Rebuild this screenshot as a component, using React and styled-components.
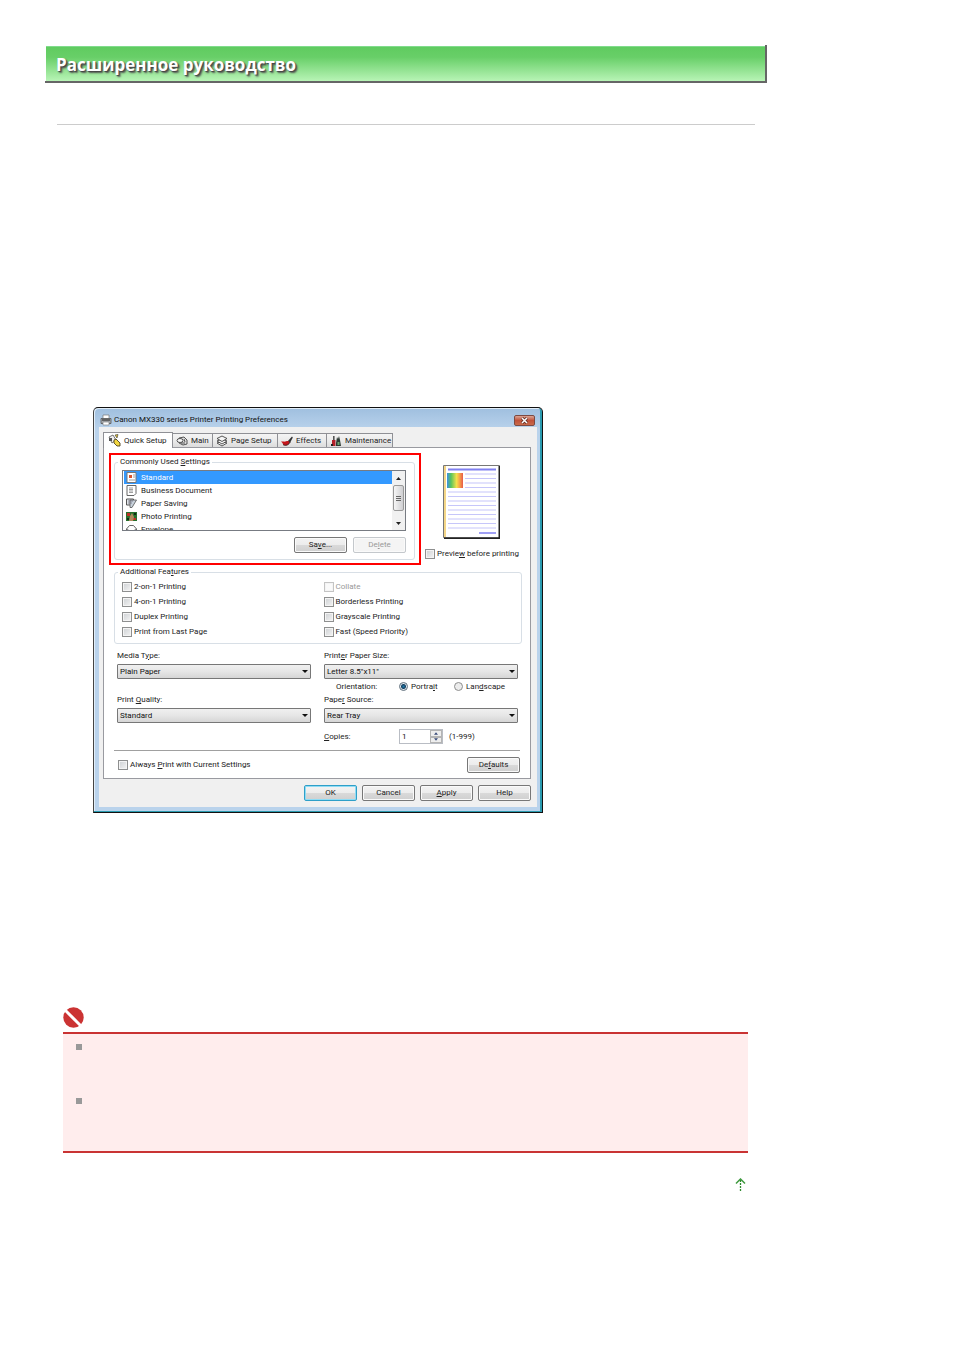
import React from "react";
import styled, { createGlobalStyle } from "styled-components";

const GlobalStyle = createGlobalStyle`
  * {
    box-sizing: border-box;
  }

  body {
    margin: 0;
    background: #fff;
    font-family: Roboto, "Liberation Sans", sans-serif;
  }

  svg {
    flex-shrink: 0;
  }
`;

const Page = styled.div`
  padding: 45px 187px 160px 45px;
`;

const Banner = styled.header`
  border-right: 2px solid #666;
  border-bottom: 2px solid #666;
  height: 38px;
  padding: 1px 0 0 1px;
`;

const BannerTitle = styled.h1`
  margin: 0;
  height: 35px;
  padding-left: 10px;
  border-top: 1px solid #80dc8c;
  background: linear-gradient(#60cb60, #68cf68 30%, #b8f4b6);
  color: #fff;
  font: 700 17px/36px "Open Sans", "Noto Sans", sans-serif;
  text-shadow: 1px 1px 1px #444, 2px 2px 2px #555;
  white-space: nowrap;
`;

const Rule = styled.hr`
  margin: 41px 12px 0;
  border: 0;
  border-top: 1px solid #ccc;
`;

const Figure = styled.figure`
  margin: 282px 0 0 48px;
`;

const Dialog = styled.section`
  width: 100%;
  max-width: 450px;
  padding: 0 5px 5px;
  border: 1px solid #111;
  border-left-color: #444;
  border-radius: 5px 5px 0 0;
  background: linear-gradient(#9fbfdf, #bad3ec 22px, #bad3ec);
  box-shadow: inset -2px -1px 0 #2a9bb0, inset 1px 1px 0 #e2eef8;
  color: #222;
  font-size: 8px;
  line-height: 12px;
`;

const TitleBar = styled.div`
  display: flex;
  align-items: center;
  gap: 2px;
  height: 19px;
  padding: 5px 2px 0 1px;
`;

const DialogTitle = styled.h2`
  flex: 1;
  margin: 0;
  color: #111;
  font-size: 8px;
  font-weight: 400;
`;

const CloseButton = styled.button`
  display: flex;
  align-items: center;
  justify-content: center;
  width: 21px;
  height: 11px;
  padding: 0;
  border: 1px solid #7d4a42;
  border-radius: 2px;
  background: linear-gradient(#dba494, #c0523a 50%, #c96a4a);
`;

const Client = styled.div`
  padding: 4px 6px 6px 4px;
  background: #f0f0f0;
`;

const TabList = styled.div`
  display: flex;
  align-items: flex-end;
  height: 16px;
`;

const Tab = styled.button`
  position: relative;
  display: flex;
  align-items: center;
  gap: 3px;
  width: ${(p) => p.$width}px;
  height: ${(p) => (p.$active ? 16 : 14)}px;
  margin-bottom: ${(p) => (p.$active ? -1 : 0)}px;
  padding: 0 0 0 ${(p) => (p.$active ? 4 : 3)}px;
  border: 1px solid #8f9095;
  border-left-width: ${(p) => (p.$active ? 1 : 0)}px;
  border-bottom: 0;
  background: ${(p) =>
    p.$active ? "#fff" : "linear-gradient(#f4f4f4, #ebebeb 50%, #dcdcdc)"};
  color: #222;
  font: inherit;
  white-space: nowrap;
`;

const Pane = styled.div`
  padding: 5px 0 5px 5px;
  border: 1px solid #999aa0;
  background: #fff;
`;

const TopRow = styled.div`
  display: flex;
  gap: 4px;
`;

const Highlight = styled.div`
  flex: 0 1 312px;
  padding: 2px 4px 3px 3px;
  border: 2px solid #f00;
`;

const Group = styled.fieldset`
  min-width: 0;
  margin: ${(p) => p.$margin || "0"};
  padding: ${(p) => p.$padding};
  border: 1px solid #d8dfe6;
  border-radius: 3px;
`;

const Legend = styled.legend`
  margin-left: ${(p) => p.$indent || 0}px;
  padding: 0 2px;
  line-height: 10px;
`;

const ListFrame = styled.div`
  display: flex;
  height: 61px;
  border: 1px solid #777b82;
  background: #fff;
`;

const List = styled.ul`
  flex: 1;
  margin: 0;
  padding: 0 0 0 1px;
  overflow: hidden;
  list-style: none;
`;

const ListItem = styled.li`
  display: flex;
  align-items: center;
  gap: 4px;
  height: 13px;
  padding-left: 2px;
  background: ${(p) => (p.$selected ? "#3399ff" : "transparent")};
  color: ${(p) => (p.$selected ? "#fff" : "#222")};
`;

const ScrollBar = styled.div`
  display: flex;
  flex-direction: column;
  align-items: center;
  width: 13px;
  background: #f1f1f1;
`;

const ScrollButton = styled.button`
  display: flex;
  align-items: center;
  justify-content: center;
  width: 100%;
  height: 14px;
  padding: 0;
  border: 0;
  background: none;
`;

const ScrollThumb = styled.div`
  display: flex;
  flex-direction: column;
  align-items: center;
  justify-content: center;
  gap: 1px;
  width: 11px;
  height: 26px;
  margin-bottom: auto;
  border: 1px solid #999;
  border-radius: 2px;
  background: linear-gradient(90deg, #f6f6f6, #cfcfd2);

  i {
    width: 5px;
    height: 1px;
    background: #666;
  }
`;

const ButtonRow = styled.div`
  display: flex;
  justify-content: flex-end;
  gap: ${(p) => p.$gap || 5}px;
  margin-top: 6px;
`;

const Button = styled.button`
  width: 53px;
  height: 16px;
  padding: 0;
  border: 1px solid ${(p) => (p.$primary ? "#2f9fc8" : "#777")};
  border-radius: 2px;
  background: linear-gradient(#f3f3f3, #ececec 50%, #dadada 50%, #cfcfcf);
  box-shadow: inset 0 0 0 1px ${(p) => (p.$primary ? "#8fdcf5" : "#fafafa")};
  color: #222;
  font: inherit;

  &:disabled {
    border-color: #c4c8cc;
    background: #f4f4f4;
    color: #999;
  }
`;

const PreviewColumn = styled.div`
  flex: 1;
  display: flex;
  flex-direction: column;
  gap: 7px;
  padding-top: 12px;
`;

const PreviewPage = styled.svg`
  display: block;
  margin-left: 18px;
`;

const CheckLabel = styled.label`
  display: flex;
  align-items: center;
  gap: 2px;
  height: 15px;
  color: ${(p) => (p.$disabled ? "#999" : "#222")};
  white-space: nowrap;
`;

const Check = styled.input`
  appearance: none;
  width: 10px;
  height: 10px;
  margin: 0;
  border: 1px solid #8e8f8f;
  background: linear-gradient(135deg, #cdd0d3, #f4f4f4);
  box-shadow: inset 0 0 0 1px #f4f4f4;

  &:disabled {
    border-color: #c4c4c4;
    background: #fafafa;
  }
`;

const Radio = styled.input`
  appearance: none;
  width: 9px;
  height: 9px;
  margin: 0 1px 0 0;
  border: 1px solid #8e8f8f;
  border-radius: 50%;
  background: #ececec;

  &:checked {
    border-color: #5f6f7c;
    background: radial-gradient(#1d7fb0 0, #163f60 2px, #dfe8ee 3px);
  }
`;

const Columns = styled.div`
  display: grid;
  grid-template-columns: 1fr 1fr;
  column-gap: ${(p) => p.$gap || 0}px;
`;

const FormColumns = styled(Columns)`
  margin: 6px 12px 0 8px;
`;

const Field = styled.div`
  display: flex;
  flex-direction: column;
  gap: 2px;
  margin-bottom: ${(p) => p.$after || 0}px;
`;

const SelectBox = styled.span`
  position: relative;
  display: block;

  &::after {
    content: "";
    position: absolute;
    top: 6px;
    right: 3px;
    border: 3px solid transparent;
    border-top-color: #111;
    border-bottom: 0;
    pointer-events: none;
  }
`;

const Select = styled.select`
  appearance: none;
  display: block;
  width: 100%;
  height: 15px;
  padding: 0 2px;
  border: 1px solid #777;
  border-radius: 1px;
  background: linear-gradient(#f0f0f0, #e6e6e6 50%, #d6d6d6);
  color: #111;
  font: inherit;
`;

const Orientation = styled.div`
  display: flex;
  align-items: center;
  height: 15px;
  padding-left: 12px;

  > span {
    width: 63px;
  }

  label {
    width: 55px;
  }
`;

const Copies = styled.div`
  display: flex;
  align-items: center;
  height: 15px;
  margin-top: 6px;

  > label {
    width: 75px;
  }
`;

const Spinner = styled.span`
  display: flex;
  width: 44px;
  height: 15px;
  margin-right: 6px;
  border: 1px solid #b9bdc4;
`;

const NumberInput = styled.input`
  flex: 1;
  min-width: 0;
  padding: 0 2px;
  border: 0;
  color: #111;
  font: inherit;
`;

const SpinButtons = styled.span`
  display: flex;
  flex-direction: column;
  width: 12px;

  button {
    display: flex;
    flex: 1;
    align-items: center;
    justify-content: center;
    padding: 0;
    border: 1px solid #b4b4b4;
    background: #eee;
  }
`;

const Divider = styled.hr`
  margin: 6px 10px 6px 5px;
  border: 0;
  border-top: 1px solid #a0a0a0;
`;

const PaneFooter = styled.div`
  display: flex;
  justify-content: space-between;
  padding: 0 10px 0 9px;
`;

const NoteIcon = styled.svg`
  display: block;
  margin: 194px 0 4px 18px;
`;

const Note = styled.ul`
  min-height: 121px;
  margin: 0 19px 0 18px;
  padding: 10px 13px 0;
  border: solid #c93333;
  border-width: 2px 0;
  background: #ffeded;
  list-style: none;

  li {
    height: 53px;
  }

  li::before {
    content: "";
    display: block;
    width: 6px;
    height: 6px;
    background: #999;
  }

  li + li {
    margin-top: 1px;
  }
`;

const TopLink = styled.a`
  display: block;
  width: 11px;
  margin: 25px 21px 0 auto;

  svg {
    display: block;
  }
`;

const Arrow = ({ up, color = "#222", size = 5 }) => (
  <svg width={size} height="3" viewBox="0 0 5 3">
    <path d={up ? "M0 3L2.5 0L5 3z" : "M0 0L2.5 3L5 0z"} fill={color} />
  </svg>
);

const PrinterIcon = () => (
  <svg width="12" height="12" viewBox="0 0 12 12">
    <path d="M3 1h6v4H3z" fill="#fff" stroke="#777" strokeWidth=".7" />
    <path d="M1 4.5h10v5H1z" fill="#a9adb1" stroke="#555" strokeWidth=".8" />
    <path d="M2 5.3h8v1.4H2z" fill="#444" />
    <path d="M3 8h6v3H3z" fill="#fff" stroke="#777" strokeWidth=".6" />
  </svg>
);

const tabIcons = {
  quick: (
    <svg width="13" height="13" viewBox="0 0 13 13">
      <path d="M1 3l4-2 3 5-4 3z" fill="#eee" stroke="#555" strokeWidth=".8" />
      <path d="M1 4h3v3H1z" fill="#555" />
      <path d="M7 1l3-.5L9 4z" fill="#e8c531" stroke="#333" strokeWidth=".6" />
      <path
        d="M6 6l2-1 4 4v3H9L6 9z"
        fill="#f2d640"
        stroke="#4d4220"
        strokeWidth=".9"
      />
    </svg>
  ),
  main: (
    <svg width="12" height="12" viewBox="0 0 12 12">
      <path
        d="M3 3l5-1 3 3v4l-4 1-4-2z"
        fill="#ddd"
        stroke="#444"
        strokeWidth=".9"
      />
      <ellipse cx="4" cy="5.5" rx="3" ry="2" fill="#f7f7f7" stroke="#555" />
      <path d="M5 8h4M8 4l1 3" stroke="#333" strokeWidth=".8" />
    </svg>
  ),
  page: (
    <svg width="12" height="12" viewBox="0 0 12 12">
      <g fill="#f5f5f5" stroke="#444" strokeWidth=".9">
        <path d="M1 8l5-2 5 2-5 3z" />
        <path d="M1 6l5-2 5 2-5 3z" />
        <path d="M1 3.5L6 1l5 2.5-5 3z" />
      </g>
    </svg>
  ),
  effects: (
    <svg width="12" height="12" viewBox="0 0 12 12">
      <path d="M6 7l5-5.5.8 1L9 8z" fill="#333" />
      <path d="M0 6.5h3C4 7 5 6 7 6c2 .5 2 3-1 4-2 .6-4 0-4.5-2z" fill="#c4161c" />
      <path d="M2 9.5c2 1.5 5 1 7-2" stroke="#3c1010" fill="none" />
    </svg>
  ),
  maintenance: (
    <svg width="12" height="12" viewBox="0 0 12 12">
      <path d="M3 1h1.6v4H3z" fill="#555" />
      <path d="M2 5h3.5v6H2z" fill="#b3202a" />
      <path d="M6 8l1-6 1 2 1-3 1 4 1 6H6z" fill="#2d3a34" />
      <path d="M7.5 7h2v3h-2z" fill="#69a46f" />
      <path d="M1 9h2v2H1z" fill="#222" />
    </svg>
  ),
};

const listIcons = {
  standard: (
    <svg width="11" height="11" viewBox="0 0 11 11">
      <path d="M1 .5h9v10H1z" fill="#fff" stroke="#777" />
      <path d="M3 3h3v3H3z" fill="#d9532c" />
      <path d="M7 3h2M7 5h2M3 8h6" stroke="#888" strokeWidth=".8" />
    </svg>
  ),
  business: (
    <svg width="11" height="11" viewBox="0 0 11 11">
      <path d="M1 .5h9v8l-2 2H1z" fill="#fff" stroke="#666" />
      <path d="M3 3h4M3 4.5h4M3 6h4M3 7.5h4" stroke="#777" strokeWidth=".7" />
    </svg>
  ),
  saving: (
    <svg width="11" height="11" viewBox="0 0 11 11">
      <path d="M.5 1h7v5l-3 1H.5z" fill="#dfe3e8" stroke="#555" />
      <path d="M4 2h6.5L6 9.5H4z" fill="#c8d2dc" stroke="#555" strokeWidth=".8" />
      <path d="M2 3h5M2 5h4" stroke="#667" strokeWidth=".7" />
    </svg>
  ),
  photo: (
    <svg width="11" height="11" viewBox="0 0 11 11">
      <path d="M0 1h11v9H0z" fill="#27702d" />
      <path d="M1 2h3v3H1zM7 7h3v2H7z" fill="#be2f28" />
      <path d="M4 5l2-3 2 4-1 4H3z" fill="#b28a5d" />
      <path d="M8 2h2v2H8zM1 7h2v2H1z" fill="#112c16" />
    </svg>
  ),
  envelope: (
    <svg width="11" height="11" viewBox="0 0 11 11">
      <path d="M.5 5l3-3.5h4l3 3.5v5H.5z" fill="#fff" stroke="#666" />
      <path d="M.5 5L5.5 8l5-3" fill="none" stroke="#666" strokeWidth=".8" />
    </svg>
  ),
};

const tabs = [
  { icon: "quick", label: "Quick Setup", width: 70, active: true },
  { icon: "main", label: "Main", width: 40 },
  { icon: "page", label: "Page Setup", width: 65 },
  { icon: "effects", label: "Effects", width: 49 },
  { icon: "maintenance", label: "Maintenance", width: 66 },
];

const settings = [
  { icon: "standard", label: "Standard", selected: true },
  { icon: "business", label: "Business Document" },
  { icon: "saving", label: "Paper Saving" },
  { icon: "photo", label: "Photo Printing" },
  { icon: "envelope", label: "Envelope" },
];

const features = [
  { label: "2-on-1 Printing" },
  { label: "Collate", disabled: true },
  { label: "4-on-1 Printing" },
  { label: "Borderless Printing" },
  { label: "Duplex Printing" },
  { label: "Grayscale Printing" },
  { label: "Print from Last Page" },
  { label: "Fast (Speed Priority)" },
];

const Preview = () => (
  <PreviewPage width="58" height="74" viewBox="0 0 58 74">
    <defs>
      <linearGradient id="rainbow">
        <stop offset="0" stopColor="#3f8fe0" />
        <stop offset=".25" stopColor="#58c55c" />
        <stop offset=".6" stopColor="#f5e04a" />
        <stop offset=".8" stopColor="#f5a04a" />
        <stop offset="1" stopColor="#e85a4a" />
      </linearGradient>
    </defs>
    <path d="M.5.5h56v72H.5z" fill="#fff" stroke="#777" />
    <path d="M57 1v73H1v-1.5h54.5V1z" fill="#222" />
    <path d="M2 1v71" stroke="#f0c860" strokeWidth="1.5" />
    <path d="M5 4.5h48" stroke="#8080f0" strokeWidth="2" />
    <path
      d="M22 9h31M22 13.5h31M22 18h31M22 22.5h31M5 27h48M5 31.5h48M5 36h48M5 40.5h48M5 45h48M5 49.5h48M5 54h48M5 58.5h48M5 63h48"
      stroke="#c6c6fa"
      strokeWidth="1.2"
    />
    <path d="M4 8h16v15H4z" fill="url(#rainbow)" />
    <path d="M36 68h17" stroke="#8080f0" strokeWidth="1.5" />
  </PreviewPage>
);

function SelectField({ id, label, value, after }) {
  return (
    <Field $after={after}>
      <label htmlFor={id}>{label}</label>
      <SelectBox>
        <Select id={id} defaultValue={value}>
          <option>{value}</option>
        </Select>
      </SelectBox>
    </Field>
  );
}

function PrintDialog() {
  return (
    <Dialog aria-labelledby="dialog-title">
      <TitleBar>
        <PrinterIcon />
        <DialogTitle id="dialog-title">
          Canon MX330 series Printer Printing Preferences
        </DialogTitle>
        <CloseButton aria-label="Close">
          <svg width="9" height="7" viewBox="0 0 9 7">
            <path d="M2 1l5 5M7 1L2 6" stroke="#5c2a20" strokeWidth="3" />
            <path d="M2 1l5 5M7 1L2 6" stroke="#fff" strokeWidth="1.5" />
          </svg>
        </CloseButton>
      </TitleBar>
      <Client>
        <TabList role="tablist">
          {tabs.map((tab) => (
            <Tab
              key={tab.icon}
              role="tab"
              aria-selected={!!tab.active}
              $active={tab.active}
              $width={tab.width}
            >
              {tabIcons[tab.icon]}
              {tab.label}
            </Tab>
          ))}
        </TabList>
        <Pane>
          <TopRow>
            <Highlight>
              <Group $padding="3px 8px 6px 7px">
                <Legend $indent={-4}>
                  Commonly Used <u>S</u>ettings
                </Legend>
                <ListFrame>
                  <List role="listbox" aria-label="Commonly Used Settings">
                    {settings.map((item) => (
                      <ListItem
                        key={item.icon}
                        role="option"
                        aria-selected={!!item.selected}
                        $selected={item.selected}
                      >
                        {listIcons[item.icon]}
                        {item.label}
                      </ListItem>
                    ))}
                  </List>
                  <ScrollBar>
                    <ScrollButton aria-label="Scroll up">
                      <Arrow up />
                    </ScrollButton>
                    <ScrollThumb>
                      <i />
                      <i />
                      <i />
                    </ScrollThumb>
                    <ScrollButton aria-label="Scroll down">
                      <Arrow />
                    </ScrollButton>
                  </ScrollBar>
                </ListFrame>
                <ButtonRow $gap={6}>
                  <Button>
                    Sa<u>v</u>e...
                  </Button>
                  <Button disabled>
                    De<u>l</u>ete
                  </Button>
                </ButtonRow>
              </Group>
            </Highlight>
            <PreviewColumn>
              <Preview />
              <CheckLabel>
                <Check type="checkbox" />
                <span>
                  Previe<u>w</u> before printing
                </span>
              </CheckLabel>
            </PreviewColumn>
          </TopRow>

          <Group $margin="2px 8px 0 5px" $padding="2px 0 4px 7px">
            <Legend $indent={-4}>
              Additional Fea<u>t</u>ures
            </Legend>
            <Columns $gap={4}>
              {features.map((f) => (
                <CheckLabel key={f.label} $disabled={f.disabled}>
                  <Check type="checkbox" disabled={f.disabled} />
                  {f.label}
                </CheckLabel>
              ))}
            </Columns>
          </Group>

          <FormColumns $gap={13}>
            <div>
              <SelectField
                id="media"
                label={
                  <>
                    Media T<u>y</u>pe:
                  </>
                }
                value="Plain Paper"
                after={15}
              />
              <SelectField
                id="quality"
                label={
                  <>
                    Print <u>Q</u>uality:
                  </>
                }
                value="Standard"
              />
            </div>
            <div>
              <SelectField
                id="size"
                label={
                  <>
                    Print<u>e</u>r Paper Size:
                  </>
                }
                value={'Letter 8.5"x11"'}
              />
              <Orientation role="radiogroup" aria-label="Orientation">
                <span>Orientation:</span>
                <CheckLabel>
                  <Radio type="radio" name="orientation" defaultChecked />
                  <span>
                    Portra<u>i</u>t
                  </span>
                </CheckLabel>
                <CheckLabel>
                  <Radio type="radio" name="orientation" />
                  <span>
                    Lan<u>d</u>scape
                  </span>
                </CheckLabel>
              </Orientation>
              <SelectField
                id="source"
                label={
                  <>
                    Pape<u>r</u> Source:
                  </>
                }
                value="Rear Tray"
              />
              <Copies>
                <label htmlFor="copies">
                  <u>C</u>opies:
                </label>
                <Spinner>
                  <NumberInput id="copies" defaultValue="1" />
                  <SpinButtons>
                    <button aria-label="More copies">
                      <Arrow up size={4} color="#3b4d7a" />
                    </button>
                    <button aria-label="Fewer copies">
                      <Arrow size={4} color="#3b4d7a" />
                    </button>
                  </SpinButtons>
                </Spinner>
                (1-999)
              </Copies>
            </div>
          </FormColumns>

          <Divider />
          <PaneFooter>
            <CheckLabel>
              <Check type="checkbox" />
              <span>
                Always <u>P</u>rint with Current Settings
              </span>
            </CheckLabel>
            <Button>
              De<u>f</u>aults
            </Button>
          </PaneFooter>
        </Pane>
        <ButtonRow>
          <Button $primary>OK</Button>
          <Button>Cancel</Button>
          <Button>
            <u>A</u>pply
          </Button>
          <Button>Help</Button>
        </ButtonRow>
      </Client>
    </Dialog>
  );
}

function App() {
  return (
    <Page id="top">
      <GlobalStyle />
      <Banner>
        <BannerTitle>Расширенное руководство</BannerTitle>
      </Banner>
      <main>
        <Rule />
        <Figure>
          <PrintDialog />
        </Figure>
        <NoteIcon width="21" height="21" viewBox="0 0 21 21">
          <circle cx="10.5" cy="10.5" r="10.2" fill="#cb3333" />
          <path d="M2 3L17.5 18.5" stroke="#fff" strokeWidth="3" />
        </NoteIcon>
        <Note>
          <li />
          <li />
        </Note>
        <TopLink href="#top" aria-label="Back to top">
          <svg width="11" height="13" viewBox="0 0 11 13">
            <path d="M1 5.5L5.5 1L10 5.5" fill="none" stroke="#3f9a3f" strokeWidth="1.5" />
            <path
              d="M5.5 2v11"
              stroke="#2f8a2f"
              strokeWidth="1.3"
              strokeDasharray="2 1"
            />
          </svg>
        </TopLink>
      </main>
    </Page>
  );
}

export default App;
